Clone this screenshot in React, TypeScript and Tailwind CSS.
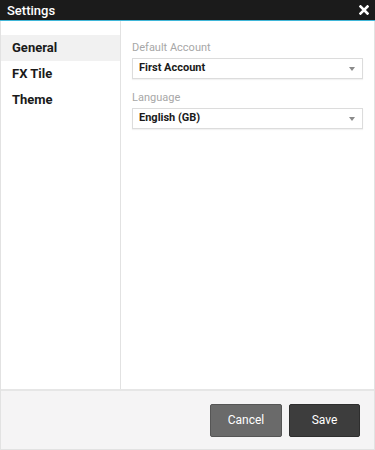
export default function App() {
  return (
    <div className="flex h-[450px] w-[375px] flex-col bg-white font-['Roboto',sans-serif]">
      {/* Title bar */}
      <div className="flex h-[21px] shrink-0 items-center justify-between border-b border-[#3fb6d8] bg-[#1b1b1b] pl-[7px] pr-[6px]">
        <span className="text-[13px] font-medium leading-none text-white">Settings</span>
        <svg width="10" height="10" viewBox="0 0 10 10">
          <path d="M1.5 1.5 L8.5 8.5 M8.5 1.5 L1.5 8.5" stroke="white" strokeWidth="2.6" strokeLinecap="square" />
        </svg>
      </div>

      <div className="flex min-h-0 flex-1 flex-col border-x border-b border-[#e2e2e2]">
        <div className="flex min-h-0 flex-1">
          {/* Sidebar */}
          <div className="w-[120px] shrink-0 border-r border-[#e2e2e2] pt-[14px]">
            {["General", "FX Tile", "Theme"].map((item, i) => (
              <div
                key={item}
                className={`flex h-[26px] items-center pl-[11px] text-[13px] font-bold text-[#1a1a1a] ${
                  i === 0 ? "bg-[#f1f1f1]" : ""
                }`}
              >
                {item}
              </div>
            ))}
          </div>

          {/* Content */}
          <div className="flex flex-1 flex-col gap-[12px] pl-[11px] pr-[11px] pt-[20px]">
            {[
              { label: "Default Account", value: "First Account" },
              { label: "Language", value: "English (GB)" },
            ].map(({ label, value }) => (
              <div key={label} className="flex flex-col gap-[4px]">
                <span className="text-[11px] leading-[13px] text-[#a7a7a7]">{label}</span>
                <div className="flex h-[21px] items-center justify-between border border-[#dcdcdc] bg-white pl-[6px] pr-[7px] shadow-[0_1px_1px_rgba(0,0,0,0.05)]">
                  <span className="text-[11px] font-bold text-[#1a1a1a]">{value}</span>
                  <svg width="6" height="4" viewBox="0 0 6 4">
                    <path d="M0 0 H6 L3 4 Z" fill="#8a8a8a" />
                  </svg>
                </div>
              </div>
            ))}
          </div>
        </div>

        {/* Footer */}
        <div className="flex h-[60px] shrink-0 items-center justify-end gap-[7px] border-t-2 border-[#e6e6e6] bg-[#f5f4f5] pr-[14px]">
          <button className="h-[33px] w-[72px] rounded-[2px] border border-[#555] bg-[#6a6a6a] text-[12px] text-white">
            Cancel
          </button>
          <button className="h-[33px] w-[71px] rounded-[2px] border border-[#2e2e2e] bg-[#3d3d3d] text-[12px] text-white">
            Save
          </button>
        </div>
      </div>
    </div>
  );
}
